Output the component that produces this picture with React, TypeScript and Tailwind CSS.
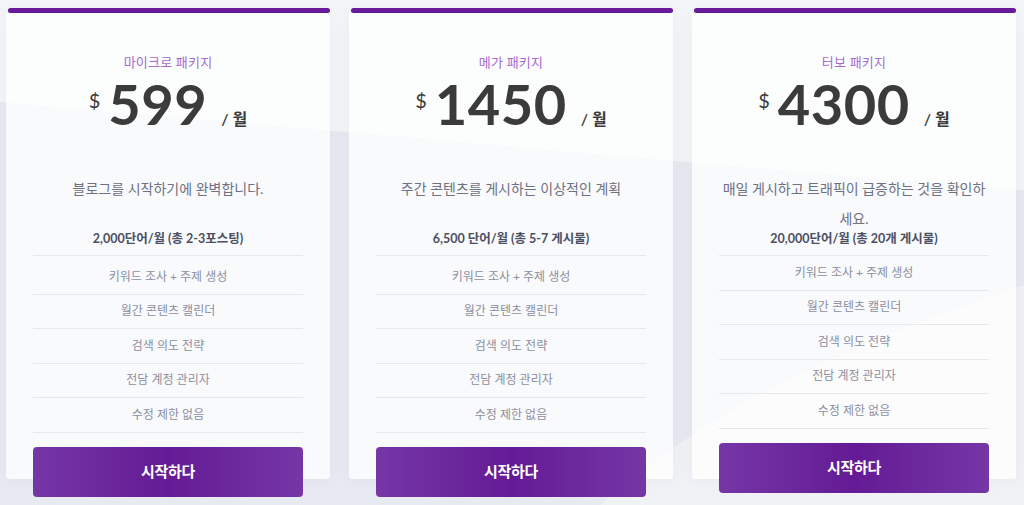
import React from "react";

const plans = [
  {
    name: "마이크로 패키지",
    price: "599",
    desc: "블로그를 시작하기에 완벽합니다.",
    words: "2,000단어/월 (총 2-3포스팅)",
    tall: true,
  },
  {
    name: "메가 패키지",
    price: "1450",
    desc: "주간 콘텐츠를 게시하는 이상적인 계획",
    words: "6,500 단어/월 (총 5-7 게시물)",
    tall: true,
  },
  {
    name: "터보 패키지",
    price: "4300",
    desc: "매일 게시하고 트래픽이 급증하는 것을 확인하세요.",
    words: "20,000단어/월 (총 20개 게시물)",
    tall: false,
  },
];

const features = [
  "키워드 조사 + 주제 생성",
  "월간 콘텐츠 캘린더",
  "검색 의도 전략",
  "전담 계정 관리자",
  "수정 제한 없음",
];

function Card({ p }: { p: (typeof plans)[number] }) {
  return (
    <div className="flex flex-col">
      <div className="h-[5px] ml-[2px] rounded-full bg-[#6a1b9a]" />
      <div className="flex-1 flex flex-col bg-white/75 shadow-[0_0_18px_rgba(40,50,90,0.05)] rounded-b-[3px] px-[27px] pt-[39px]">
        <div className="text-center text-[13px] leading-[20px] tracking-[0.2px] text-[#a66bcf]">
          {p.name}
        </div>
        <div className="mt-[4px] flex items-baseline justify-center text-[#3b3b3b]">
          <span className="self-start mt-[14px] mr-[8px] text-[20px] leading-[20px]">$</span>
          <span className="text-[56px] leading-[56px] font-bold tracking-[0.5px]">{p.price}</span>
          <span className="ml-[14px] text-[16px] leading-[20px] font-semibold">/ 월</span>
        </div>
        <div className="mt-[42px] h-[55px] text-center text-[14px] leading-[30px] text-[#6e7182]">
          {p.desc}
        </div>
        <div className="text-center text-[12.5px] leading-[20px] font-bold text-[#4b4f66] pb-[6px] border-b border-[#e7e8ec]">
          {p.words}
        </div>
        <div className={p.tall ? "mt-[4px]" : ""}>
          {features.map((f) => (
            <div
              key={f}
              className="h-[34.5px] flex items-center justify-center border-b border-[#e7e8ec] text-[12px] text-[#8c8fa0]"
            >
              {f}
            </div>
          ))}
        </div>
        <button className="mt-[14px] -mb-[18px] h-[50px] rounded-[4px] bg-linear-to-r from-[#7536a6] via-[#641a95] to-[#7536a6] text-white text-[15px] font-bold tracking-[-0.3px]">
          시작하다
        </button>
      </div>
    </div>
  );
}

export default function App() {
  return (
    <div className="relative w-[1024px] h-[505px] overflow-hidden bg-[#e8eaf2] font-['Lato','Noto_Sans_CJK_KR',sans-serif]">
      <svg
        className="absolute inset-0"
        width="1024"
        height="505"
        viewBox="0 0 1024 505"
        preserveAspectRatio="none"
      >
        <path d="M0,0 H1024 V190 C820,175 560,150 0,102 Z" fill="#f4f5f8" />
        <path d="M1024,285 C860,340 720,400 600,505 H1024 Z" fill="#f1f2f6" />
      </svg>
      <div className="relative grid grid-cols-[324px_324px_324px] gap-[19px] pl-[6px] pt-[8px]">
        {plans.map((p) => (
          <Card key={p.name} p={p} />
        ))}
      </div>
    </div>
  );
}
